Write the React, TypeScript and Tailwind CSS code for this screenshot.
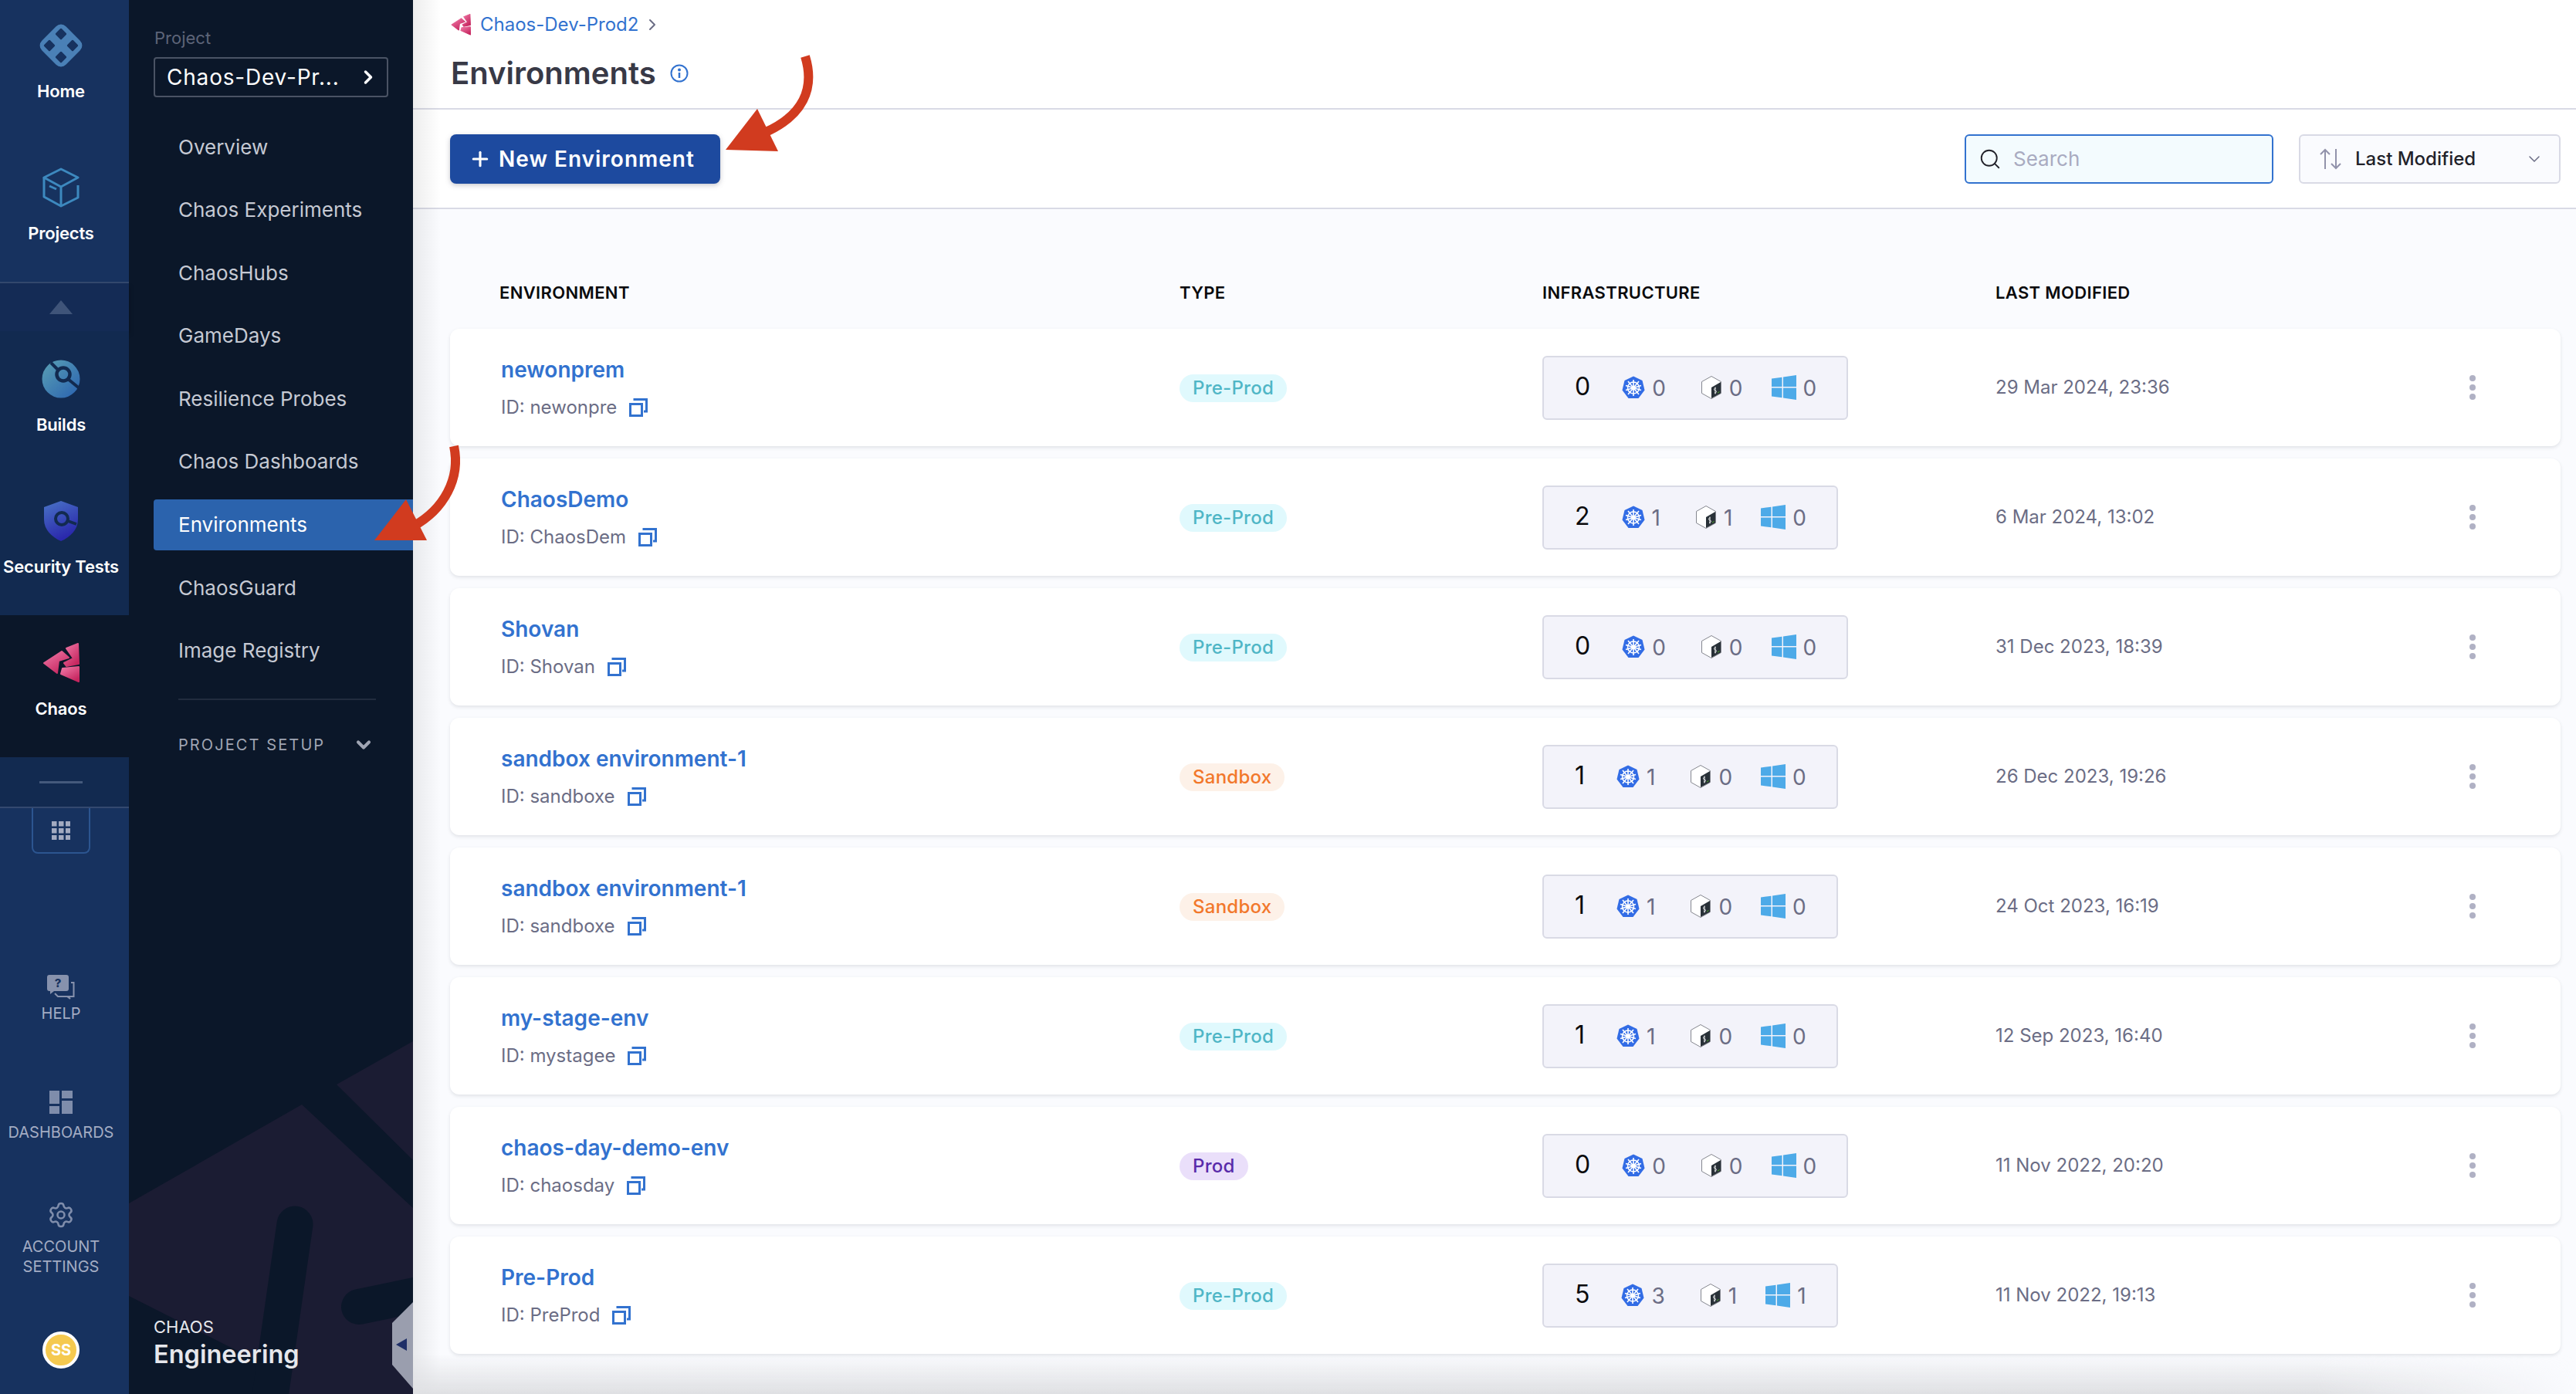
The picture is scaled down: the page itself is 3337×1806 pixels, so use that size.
import { ChevronDown, ChevronRight, Plus, Search, Settings } from "lucide-react";

type Env = {
  name: string;
  id: string;
  type: "Pre-Prod" | "Sandbox" | "Prod";
  counts: [number, number, number, number];
  modified: string;
};

const envs: Env[] = [
  { name: "newonprem", id: "newonpre", type: "Pre-Prod", counts: [0, 0, 0, 0], modified: "29 Mar 2024, 23:36" },
  { name: "ChaosDemo", id: "ChaosDem", type: "Pre-Prod", counts: [2, 1, 1, 0], modified: "6 Mar 2024, 13:02" },
  { name: "Shovan", id: "Shovan", type: "Pre-Prod", counts: [0, 0, 0, 0], modified: "31 Dec 2023, 18:39" },
  { name: "sandbox environment-1", id: "sandboxe", type: "Sandbox", counts: [1, 1, 0, 0], modified: "26 Dec 2023, 19:26" },
  { name: "sandbox environment-1", id: "sandboxe", type: "Sandbox", counts: [1, 1, 0, 0], modified: "24 Oct 2023, 16:19" },
  { name: "my-stage-env", id: "mystagee", type: "Pre-Prod", counts: [1, 1, 0, 0], modified: "12 Sep 2023, 16:40" },
  { name: "chaos-day-demo-env", id: "chaosday", type: "Prod", counts: [0, 0, 0, 0], modified: "11 Nov 2022, 20:20" },
  { name: "Pre-Prod", id: "PreProd", type: "Pre-Prod", counts: [5, 3, 1, 1], modified: "11 Nov 2022, 19:13" },
];

const menu = [
  "Overview",
  "Chaos Experiments",
  "ChaosHubs",
  "GameDays",
  "Resilience Probes",
  "Chaos Dashboards",
  "Environments",
  "ChaosGuard",
  "Image Registry",
];

const chipStyles = {
  "Pre-Prod": "bg-[#e0f9fd] text-[#4fb6c6]",
  Sandbox: "bg-[#fdf1e8] text-[#f2782c]",
  Prod: "bg-[#eadffa] text-[#592baa]",
};

function HomeIcon() {
  return (
    <svg width="60" height="60" viewBox="0 0 60 60">
      <rect x="8" y="8" width="44" height="44" rx="9" transform="rotate(45 30 30)" fill="#4a80b6" />
      <g fill="#17325f">
        <rect x="24.500" y="9.500" width="11" height="11" rx="1.500" transform="rotate(45 30 15)" />
        <rect x="24.500" y="39.500" width="11" height="11" rx="1.500" transform="rotate(45 30 45)" />
        <rect x="9.500" y="24.500" width="11" height="11" rx="1.500" transform="rotate(45 15 30)" />
        <rect x="39.500" y="24.500" width="11" height="11" rx="1.500" transform="rotate(45 45 30)" />
      </g>
    </svg>
  );
}

function CubeIcon() {
  return (
    <svg width="48" height="52" viewBox="0 0 48 52" fill="none" stroke="#3d89bf" strokeWidth="3" strokeLinejoin="round">
      <path d="M24 2 L46 13 L24 25 L2 13 Z" />
      <path d="M2 13 V38 L24 50 L46 39 V23" />
      <path d="M24 25 V50" />
      <path d="M9 24 L18 28" />
    </svg>
  );
}

function BuildsIcon() {
  return (
    <svg width="50" height="50" viewBox="0 0 50 50" fill="none">
      <defs>
        <linearGradient id="buildsFill" x1="0" y1="0" x2="1" y2="1">
          <stop offset="0" stopColor="#5aa0b4" />
          <stop offset="1" stopColor="#2a62b0" />
        </linearGradient>
      </defs>
      <circle cx="25" cy="25" r="24.500" fill="url(#buildsFill)" />
      <circle cx="28" cy="19" r="8.500" stroke="#122a50" strokeWidth="4.500" />
      <path d="M12 4 L21 13 M34 25 L50 38" stroke="#122a50" strokeWidth="4" />
    </svg>
  );
}

function ShieldIcon() {
  return (
    <svg width="44" height="52" viewBox="0 0 44 52" fill="none">
      <defs>
        <linearGradient id="shieldFill" x1="0" y1="0" x2="0.400" y2="1">
          <stop offset="0" stopColor="#4a74c6" />
          <stop offset="1" stopColor="#2a28ac" />
        </linearGradient>
      </defs>
      <path d="M22 0 L44 8 V24 C44 37 34 47 22 52 C10 47 0 37 0 24 V8 Z" fill="url(#shieldFill)" />
      <circle cx="23" cy="23" r="8" stroke="#122a50" strokeWidth="4" />
      <path d="M31 26 L42 30" stroke="#122a50" strokeWidth="3.500" />
    </svg>
  );
}

function ChaosIcon({ width = 48, height = 52, id }: { width?: number; height?: number; id: string }) {
  return (
    <svg width={width} height={height} viewBox="0 0 48 52">
      <defs>
        <linearGradient id={id} x1="0" y1="0" x2="0.700" y2="1">
          <stop offset="0" stopColor="#f07aa8" />
          <stop offset="1" stopColor="#c6265f" />
        </linearGradient>
      </defs>
      <g fill={`url(#${id})`} stroke={`url(#${id})`} strokeWidth="2" strokeLinejoin="round">
        <path d="M2 26 L25 11 L34 19 L21 23 L19 39 Z" />
        <path d="M31 7 L46 1 L47 27 L31 30 L28 26 L40 20 Z" />
        <path d="M26 33 L47 31 V50 L24 40 Z" />
      </g>
    </svg>
  );
}

function HelpIcon() {
  return (
    <svg width="36" height="32" viewBox="0 0 36 32" fill="none">
      <path d="M3 0 H25 A3 3 0 0 1 28 3 V18 A3 3 0 0 1 25 21 H9 L4 25 V21 H3 A3 3 0 0 1 0 18 V3 A3 3 0 0 1 3 0 Z" fill="#8792ad" />
      <path d="M31 10 H34.500 V28 H27 L30 31 L26 28 H14 L10 24" stroke="#8792ad" strokeWidth="2" />
      <text x="14" y="16" textAnchor="middle" fontSize="15" fontWeight="800" fill="#17325f">?</text>
    </svg>
  );
}

function DashIcon() {
  return (
    <svg width="30" height="30" viewBox="0 0 30 30" fill="#7f8dab">
      <rect x="0" y="0" width="13" height="17" />
      <rect x="16" y="0" width="14" height="10" />
      <rect x="0" y="20" width="13" height="10" />
      <rect x="16" y="13" width="14" height="17" />
    </svg>
  );
}

function GridIcon() {
  return (
    <svg width="24" height="24" viewBox="0 0 24 24" fill="#a3abc1">
      {[0, 9, 18].map((y) =>
        [0, 9, 18].map((x) => <rect key={`${x}-${y}`} x={x} y={y} width="6.500" height="6.500" />),
      )}
    </svg>
  );
}

function CopyIcon() {
  return (
    <svg width="24" height="24" viewBox="0 0 24 24" fill="none" stroke="#3272cf" strokeWidth="3">
      <rect x="1.500" y="7.500" width="15" height="15" />
      <path d="M7 3 V1.500 H22.500 V17 H19" />
    </svg>
  );
}

function K8sIcon() {
  return (
    <svg width="30" height="30" viewBox="0 0 30 30">
      <path d="M15 0.500 L26.500 6 L29.500 18.500 L21.500 29 H8.500 L0.500 18.500 L3.500 6 Z" fill="#326ce5" />
      <g stroke="#fff" strokeWidth="1.600" fill="none">
        <circle cx="15" cy="15.500" r="7.500" />
        <circle cx="15" cy="15.500" r="2" />
        <path d="M15 5 V26 M5 12.500 L25 18.500 M25 12.500 L5 18.500 M8 24 L22 7 M22 24 L8 7" />
      </g>
    </svg>
  );
}

function ShellIcon() {
  return (
    <svg width="26" height="30" viewBox="0 0 26 30">
      <path d="M13 0.500 L25.500 7.500 V22.500 L13 29.500 L0.500 22.500 V7.500 Z" fill="#fff" stroke="#85878f" strokeWidth="1" />
      <path d="M25 8 V22.500 L13 29 V15 Z" fill="#293138" />
      <path d="M18.500 16 C16 15.500 16 19 18 19 C20 19 20 22.500 17 22 M18 14.500 V23.500" stroke="#fff" strokeWidth="0.900" fill="none" />
      <path d="M21 22 L23.500 20.500" stroke="#4da82b" strokeWidth="1" />
    </svg>
  );
}

function WindowsIcon() {
  return (
    <svg width="32" height="32" viewBox="0 0 32 32" fill="#4daae8">
      <path d="M0 4.500 L13.500 2.700 V15 H0 Z" />
      <path d="M15 2.500 L32 0 V15 H15 Z" />
      <path d="M0 16.500 H13.500 V29.300 L0 27.500 Z" />
      <path d="M15 16.500 H32 V32 L15 29.500 Z" />
    </svg>
  );
}

function RailItem({ icon, label, active = false }: { icon: React.ReactNode; label: string; active?: boolean }) {
  return (
    <div className={`flex h-[184px] flex-col items-center pr-[9px] ${active ? "bg-[#0b1729]" : ""}`}>
      <div className="mt-[34px] flex h-[56px] items-center justify-center">{icon}</div>
      <span className="mt-[18px] text-[22px] leading-[26px] font-semibold tracking-[-0.200px] whitespace-nowrap text-white">{label}</span>
    </div>
  );
}

function Rail() {
  return (
    <aside className="relative z-10 flex h-full w-[167px] shrink-0 flex-col bg-[#17325f]">
      <div className="-mt-[3px] border-b-2 border-[#33496f]">
        <RailItem icon={<HomeIcon />} label="Home" />
        <RailItem icon={<CubeIcon />} label="Projects" />
      </div>
      <div className="flex h-[62px] items-center justify-center bg-[#142b55] pr-[9px] shadow-[0_4px_6px_rgba(0,0,0,0.3)]">
        <div className="h-0 w-0 border-x-[15px] border-b-[18px] border-x-transparent border-b-[#3f5479]" />
      </div>
      <div className="bg-[#122a50]">
        <RailItem icon={<BuildsIcon />} label="Builds" />
        <RailItem icon={<ShieldIcon />} label="Security Tests" />
        <RailItem icon={<ChaosIcon id="railChaos" />} label="Chaos" active />
        <div className="flex h-[66px] items-center justify-center border-b-2 border-[#33496f] pr-[9px]">
          <div className="h-[3px] w-[56px] bg-[#44597c]" />
        </div>
      </div>
      <div className="flex justify-center pr-[9px]">
        <div className="flex h-[59px] w-[76px] items-center justify-center rounded-b-lg border-x-2 border-b-2 border-[#2c5590]">
          <GridIcon />
        </div>
      </div>
      <div className="mt-auto flex flex-col items-center pr-[9px] pb-[33px] text-[#a3acc3]">
        <div className="flex flex-col items-center">
          <HelpIcon />
          <span className="mt-[6px] text-[20px] leading-[24px]">HELP</span>
        </div>
        <div className="mt-[88px] flex flex-col items-center">
          <DashIcon />
          <span className="mt-[12px] text-[20px] leading-[24px]">DASHBOARDS</span>
        </div>
        <div className="mt-[77px] flex flex-col items-center">
          <Settings size={36} strokeWidth={1.7} className="text-[#7f8dab]" />
          <span className="mt-[10px] text-center text-[20px] leading-[26px]">
            ACCOUNT
            <br />
            SETTINGS
          </span>
        </div>
        <div className="mt-[71px] flex h-[48px] w-[48px] items-center justify-center rounded-full border-[4px] border-white bg-[#f5c94f] text-[20px] font-bold text-white">
          SS
        </div>
      </div>
    </aside>
  );
}

function ProjectNav() {
  return (
    <aside className="relative flex h-full w-[368px] shrink-0 flex-col overflow-hidden bg-[#0b1729]">
      <svg className="absolute inset-0" width="368" height="1806" viewBox="0 0 368 1806">
        <path d="M0 1559 L224 1431 L368 1565 V1806 H0 Z" fill="#1b1c33" />
        <path d="M269 1405 L368 1349 V1503 Z" fill="#1b1c33" />
        <path d="M0 1679 L190 1775 L170 1806 H0 Z" fill="#0b1729" />
        <path d="M215 1586 L180 1830" stroke="#0b1729" strokeWidth="47" strokeLinecap="round" />
        <path d="M298 1693 L380 1676" stroke="#0b1729" strokeWidth="46" strokeLinecap="round" />
        <path d="M368 1687 L341 1714 V1768 L368 1799 Z" fill="#9a9eae" />
        <path d="M346 1742 L360 1734 V1750 Z" fill="#1f2f68" />
      </svg>
      <div className="relative flex h-full flex-col">
        <span className="mt-[36px] ml-[33px] text-[22px] leading-[26px] text-[#5d6478]">Project</span>
        <div className="mt-[12px] ml-[32px] flex h-[52px] w-[304px] items-center justify-between rounded border-2 border-[#4a5364] pr-[10px] pl-[15px] text-[28px] tracking-[0.800px] text-white">
          Chaos-Dev-Pr...
          <ChevronRight size={28} strokeWidth={3} />
        </div>
        <nav className="mt-[31px] flex flex-col">
          {menu.map((item) => (
            <div
              key={item}
              className={`mb-[15.600px] ml-[32px] flex h-[66px] items-center rounded-l pl-[32px] text-[26px] ${item === "Environments" ? "bg-[#2b63ad] text-white" : "text-[#c5c9d3]"}`}
            >
              {item}
            </div>
          ))}
        </nav>
        <div className="mt-[14px] mr-[48px] ml-[64px] border-t-2 border-[#222c3e]" />
        <div className="mt-[44px] mr-[50px] ml-[64px] flex items-center justify-between text-[20px] leading-[24px] tracking-[2.100px] text-[#a0a5b3]">
          PROJECT SETUP
          <ChevronDown size={28} strokeWidth={3.500} />
        </div>
        <div className="mt-auto mb-[30px] ml-[32px] text-[#e6e7ec]">
          <div className="text-[22px] leading-[26px]">CHAOS</div>
          <div className="mt-[2px] text-[32.500px] leading-[42px] font-semibold">Engineering</div>
        </div>
      </div>
    </aside>
  );
}

function InfraCounts({ counts }: { counts: Env["counts"] }) {
  return (
    <div className="flex h-[83px] w-fit items-center rounded-md border-2 border-[#d9dae5] bg-[#f3f3fa] pr-[39px] pl-[40px] text-[28px] text-[#6b6d85]">
      <span className="-mt-[2px] text-[32px] text-[#0b0b0d]">{counts[0]}</span>
      <span className="ml-[41px]">
        <K8sIcon />
      </span>
      <span className="mt-[2px] ml-[9px]">{counts[1]}</span>
      <span className="ml-[46px]">
        <ShellIcon />
      </span>
      <span className="mt-[2px] ml-[10px]">{counts[2]}</span>
      <span className="ml-[37px]">
        <WindowsIcon />
      </span>
      <span className="mt-[2px] ml-[9px]">{counts[3]}</span>
    </div>
  );
}

function EnvRow({ env }: { env: Env }) {
  return (
    <div className="grid h-[152px] grid-cols-[879px_470px_587px_610px_1fr] items-center rounded-xl bg-white pl-[66px] shadow-[0_2px_4px_rgba(96,97,112,0.16)]">
      <div>
        <div className="text-[28px] leading-[34px] font-semibold text-[#3272cf]">{env.name}</div>
        <div className="mt-[17px] flex items-center gap-[16px] text-[24px] leading-[30px] text-[#6b6d85]">
          ID: {env.id}
          <CopyIcon />
        </div>
      </div>
      <div className="pt-[1px]">
        <span className={`inline-flex h-[36px] items-center rounded-full px-[17px] text-[24px] font-medium tracking-[0.250px] ${chipStyles[env.type]}`}>
          {env.type}
        </span>
      </div>
      <InfraCounts counts={env.counts} />
      <div className="text-[24px] text-[#6b6d85]">{env.modified}</div>
      <div className="flex flex-col items-start gap-[4px] pl-[4px]">
        <span className="h-[8px] w-[8px] rounded-full bg-[#b0b1c4]" />
        <span className="h-[8px] w-[8px] rounded-full bg-[#b0b1c4]" />
        <span className="h-[8px] w-[8px] rounded-full bg-[#b0b1c4]" />
      </div>
    </div>
  );
}

function Main() {
  return (
    <main className="relative flex h-full min-w-0 flex-1 flex-col overflow-hidden bg-[#fafbfe]">
      <header className="h-[142px] shrink-0 border-b-2 border-[#d9dae5] bg-white pl-[49px]">
        <div className="flex items-center pt-[18px]">
          <ChaosIcon width={26} height={28} id="crumbChaos" />
          <span className="ml-[12px] text-[24px] leading-[28px] text-[#3272cf]">Chaos-Dev-Prod2</span>
          <ChevronRight size={24} strokeWidth={2} className="ml-[6px] text-[#6b6d85]" />
        </div>
        <div className="mt-[21px] flex items-center">
          <h1 className="text-[40px] leading-[56px] font-semibold text-[#383946]">Environments</h1>
          <svg className="ml-[18px]" width="24" height="24" viewBox="0 0 24 24" fill="none" stroke="#3272cf" strokeWidth="2">
            <circle cx="12" cy="12" r="10.500" />
            <path d="M12 11 V18" strokeWidth="2.500" />
            <circle cx="12" cy="7.500" r="1" fill="#3272cf" />
          </svg>
        </div>
      </header>
      <div className="flex h-[129px] shrink-0 items-center justify-between border-b-2 border-[#d9dae5] bg-white pr-[20px] pl-[48px]">
        <button className="flex h-[64px] w-[350px] items-center rounded-lg bg-[#1d4a9f] pl-[24px] text-[28px] font-semibold tracking-[1px] text-white shadow-[0_2px_6px_rgba(96,97,112,0.35)]">
          <Plus size={30} strokeWidth={2.500} />
          <span className="ml-[9px]">New Environment</span>
        </button>
        <div className="flex items-center gap-[33px]">
          <div className="flex h-[64px] w-[400px] items-center rounded-md border-2 border-[#3272cf] bg-[#f3fbfe] pl-[16px] text-[26px] text-[#a9abc1]">
            <Search size={30} strokeWidth={1.500} className="text-[#22222a]" />
            <span className="ml-[15px]">Search</span>
          </div>
          <div className="flex h-[64px] w-[339px] items-center rounded-md border-2 border-[#d9dae5] bg-[#fafbfe] pr-[20px] pl-[24px] text-[24px] font-medium text-[#22222a]">
            <svg width="30" height="28" viewBox="0 0 30 28" fill="none" stroke="#9293ab" strokeWidth="2">
              <path d="M8 27 V2 M2 8 L8 2 L14 8" />
              <path d="M22 1 V26 M16 20 L22 26 L28 20" />
            </svg>
            <span className="ml-[17px]">Last Modified</span>
            <ChevronDown size={24} strokeWidth={1.500} className="ml-auto text-[#6b6d85]" />
          </div>
        </div>
      </div>
      <div className="grid h-[155px] shrink-0 grid-cols-[881px_470px_587px_1fr] items-start pt-[95px] pl-[112px] text-[22px] leading-[26px] font-semibold tracking-[0.350px] text-[#0b0b0d]">
        <span>ENVIRONMENT</span>
        <span>TYPE</span>
        <span>INFRASTRUCTURE</span>
        <span>LAST MODIFIED</span>
      </div>
      <div className="mr-[20px] ml-[48px] flex flex-col gap-[16px]">
        {envs.map((env, i) => (
          <EnvRow key={`${env.id}-${i}`} env={env} />
        ))}
      </div>
      <div className="pointer-events-none absolute inset-y-0 left-0 w-[36px] bg-linear-to-r from-[#00000012] to-transparent" />
      <div className="pointer-events-none absolute inset-x-0 bottom-0 h-[52px] bg-linear-to-t from-[#dfe0e3] to-transparent [mask-image:linear-gradient(to_right,black_88%,transparent)]" />
    </main>
  );
}

export default function App() {
  return (
    <div className="relative flex h-[1806px] w-[3337px] overflow-hidden [font-family:Inter,sans-serif]">
      <Rail />
      <ProjectNav />
      <Main />
      {/* red annotation arrows */}
      <svg className="pointer-events-none absolute inset-0 z-20" width="3337" height="1806" viewBox="0 0 3337 1806" fill="none">
        <path d="M1043 73 C1056 115 1040 150 990 172" stroke="#d13b1f" strokeWidth="12" />
        <path d="M981 141 L940 194 L1008 196 Z" fill="#d13b1f" />
        <path d="M588 578 C597 620 575 660 535 682" stroke="#d13b1f" strokeWidth="12" />
        <path d="M526 647 L485 700 L553 700 Z" fill="#d13b1f" />
      </svg>
    </div>
  );
}
